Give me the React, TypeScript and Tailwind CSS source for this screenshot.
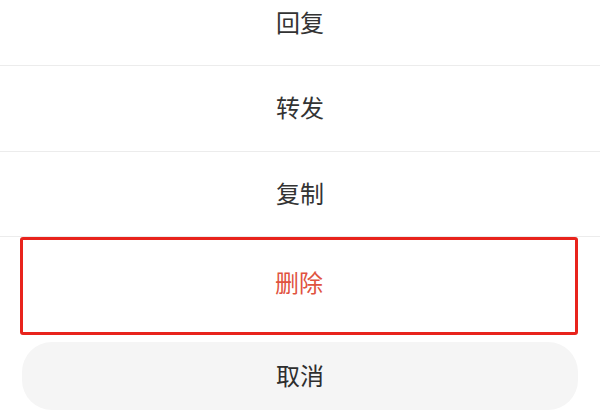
export default function App() {
  const font = { fontFamily: '"Noto Sans CJK SC", "Noto Sans", sans-serif' };
  return (
    <div className="w-[600px] h-[420px] overflow-hidden bg-white flex flex-col" style={font}>
      <div className="h-[66px] shrink-0 flex items-center justify-center pb-[22px] border-b border-[#ececec] text-[24px] text-[#333333]">
        回复
      </div>
      <div className="h-[86px] shrink-0 flex items-center justify-center pb-[3px] border-b border-[#ececec] text-[24px] text-[#333333]">
        转发
      </div>
      <div className="h-[85px] shrink-0 flex items-center justify-center pb-[2px] border-b border-[#ececec] text-[24px] text-[#333333]">
        复制
      </div>
      <div className="ml-[20px] mr-[22px] h-[98px] shrink-0 flex items-center justify-center pb-[9px] border-[3px] border-[#e8231c] rounded-[3px] text-[24px] text-[#e0533f]">
        删除
      </div>
      <div className="mt-[7px] ml-[22px] mr-[22px] h-[68px] shrink-0 flex items-center justify-center pb-[2px] rounded-[30px] bg-[#f5f5f5] text-[24px] text-[#2e2e2e]">
        取消
      </div>
    </div>
  );
}
